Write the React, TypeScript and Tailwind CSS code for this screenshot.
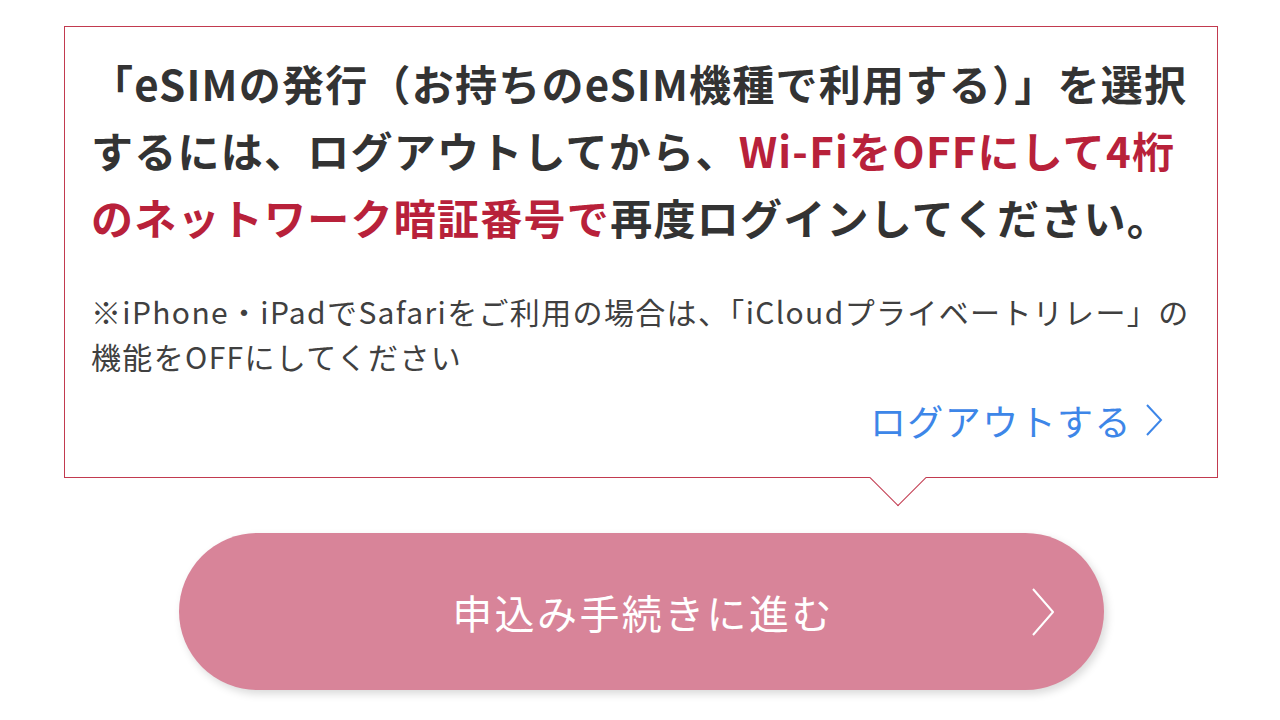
export default function App() {
  return (
    <div
      className="min-h-screen bg-white pt-[26px]"
      style={{ fontFamily: '"Noto Sans CJK JP", "Noto Sans", sans-serif' }}
    >
      {/* Notice box */}
      <div className="relative ml-[64px] w-[1154px] border-[1.5px] border-[#c23a4f] bg-white pl-[26px] pr-[20px] pt-[22px] pb-[33px]">
        <p className="whitespace-nowrap text-[42px] font-bold leading-[67px] tracking-[0.03em] text-[#333333]">
          「eSIMの発行（お持ちのeSIM機種で利用する）」を選択
          <br />
          するには、ログアウトしてから、
          <span className="text-[#b8213a]">Wi-FiをOFFにして4桁</span>
          <br />
          <span className="text-[#b8213a]">のネットワーク暗証番号で</span>
          再度ログインしてください。
        </p>
        <p className="mt-[39px] whitespace-nowrap text-[30px] leading-[45px] tracking-[0.045em] text-[#404040]">
          ※iPhone・iPadでSafariをご利用の場合は、「iCloudプライベートリレー」の
          <br />
          機能をOFFにしてください
        </p>
        <div className="mt-[17px] flex justify-end pr-[33px]">
          <a className="flex items-center gap-[12px] text-[36px] leading-[48px] tracking-[0.04em] text-[#3d86e8]">
            ログアウトする
            <svg width="20" height="36" viewBox="0 0 20 36" fill="none">
              <path d="M3 3 L17 18 L3 33" stroke="#3d86e8" strokeWidth="2" />
            </svg>
          </a>
        </div>
        {/* pointer */}
        <div className="absolute left-[813px] bottom-[-21px] h-[40px] w-[40px] rotate-45 border-b-[1.5px] border-r-[1.5px] border-[#c23a4f] bg-white" />
      </div>

      {/* Button */}
      <div className="mt-[55px] flex justify-center pl-[2px]">
        <button className="relative flex h-[157px] w-[925px] items-center justify-center rounded-full bg-[#d88499] shadow-[3px_4px_8px_rgba(0,0,0,0.15)]">
          <span className="pl-[4px] text-[40px] font-normal tracking-[0.06em] text-white">申込み手続きに進む</span>
          <svg
            className="absolute right-[48px] top-1/2 -translate-y-1/2"
            width="26"
            height="50"
            viewBox="0 0 26 50"
            fill="none"
          >
            <path d="M3 2 L23 25 L3 48" stroke="#ffffff" strokeWidth="2" strokeLinejoin="round" />
          </svg>
        </button>
      </div>
    </div>
  )
}
